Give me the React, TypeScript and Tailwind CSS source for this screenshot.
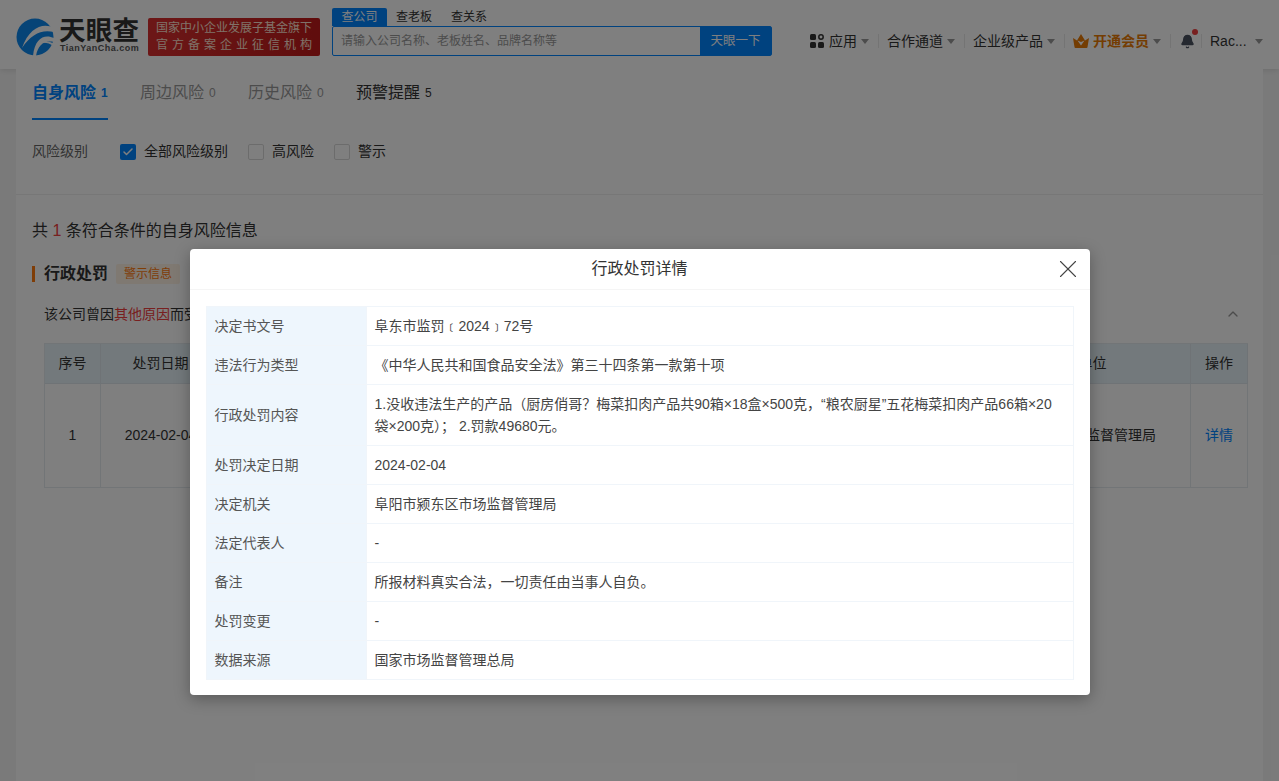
import { ChevronUp, X, Check, Bell } from "lucide-react";

const rows: [string, string[]][] = [
  ["决定书文号", ["阜东市监罚﹝2024﹞72号"]],
  ["违法行为类型", ["《中华人民共和国食品安全法》第三十四条第一款第十项"]],
  [
    "行政处罚内容",
    [
      "1.没收违法生产的产品（厨房俏哥？梅菜扣肉产品共90箱×18盒×500克，“粮农厨星”五花梅菜扣肉产品66箱×20",
      "袋×200克）； 2.罚款49680元。",
    ],
  ],
  ["处罚决定日期", ["2024-02-04"]],
  ["决定机关", ["阜阳市颍东区市场监督管理局"]],
  ["法定代表人", ["-"]],
  ["备注", ["所报材料真实合法，一切责任由当事人自负。"]],
  ["处罚变更", ["-"]],
  ["数据来源", ["国家市场监督管理总局"]],
];

function Caret() {
  return <span className="ml-[4px] h-0 w-0 border-x-[4px] border-t-[5px] border-x-transparent border-t-[#999]" />;
}

function Divider() {
  return <span className="mr-[8px] ml-[9px] h-[14px] w-px bg-[#e8e8e8]" />;
}

function Logo() {
  return (
    <svg width="38" height="38" viewBox="0 0 38 38" className="shrink-0">
      <circle cx="19" cy="19" r="18.500" fill="#0d88ee" />
      <path d="M38 10C28 4 13 9 6 30 15 16 26 11 38 14z" fill="#fff" />
      <path d="M38 20C29 16 19 19 17 38h3C22 27 28 22 38 24z" fill="#fff" />
      <path d="M25 25c4-1 8 0 13 3v-2c-5-3-10-3-13-1z" fill="#fff" />
    </svg>
  );
}

function Header() {
  return (
    <header className="flex h-[69px] items-center bg-white pt-[5px] pl-[16px] shadow-[0_1px_6px_rgba(0,0,0,0.12)]">
      <Logo />
      <div className="mb-[4px] ml-[5px] flex w-[89px] shrink-0 flex-col">
        <span className="text-[26.500px] leading-[26px] font-bold tracking-[0.3px] text-[#333]">天眼查</span>
        <span className="pl-[1px] text-[9px] leading-[8px] font-bold tracking-[0.5px] text-[#555]">TianYanCha.com</span>
      </div>
      <div className="flex h-[38px] w-[172px] shrink-0 flex-col items-center justify-center rounded-[2px] bg-gradient-to-r from-[#d92f2f] to-[#c01a1a] text-[12px] leading-[17px] text-[#ffe3d2]">
        <span>国家中小企业发展子基金旗下</span>
        <span className="pl-[4px] tracking-[4px]">官方备案企业征信机构</span>
      </div>
      <div className="mt-[3px] ml-[12px] flex w-[440px] shrink-0 flex-col self-start">
        <div className="flex h-[18px] text-[12px] leading-[18px] text-[#333]">
          <span className="w-[55px] rounded-t-[2px] bg-[#0084ff] text-center text-white">查公司</span>
          <span className="ml-[9px]">查老板</span>
          <span className="ml-[19px]">查关系</span>
        </div>
        <div className="flex h-[30px] rounded-[2px] border border-[#0084ff]">
          <span className="flex-1 pl-[8px] text-[12px] leading-[28px] text-[#999]">请输入公司名称、老板姓名、品牌名称等</span>
          <span className="w-[71px] bg-[#0084ff] text-center text-[12.500px] leading-[28px] text-white">天眼一下</span>
        </div>
      </div>
      <nav className="mt-[8px] ml-[38px] flex items-center text-[14px] text-[#333]">
        <svg width="14" height="14" viewBox="0 0 14 14" className="mr-[5px]">
          <rect width="6" height="6" rx="1.500" fill="#333" />
          <rect y="8" width="6" height="6" rx="1.500" fill="#333" />
          <rect x="8" y="8" width="6" height="6" rx="1.500" fill="#333" />
          <circle cx="11" cy="3" r="2.200" fill="none" stroke="#333" strokeWidth="1.500" />
        </svg>
        <span>应用</span>
        <Caret />
        <Divider />
        <span>合作通道</span>
        <Caret />
        <Divider />
        <span>企业级产品</span>
        <Caret />
        <Divider />
        <svg width="16" height="14" viewBox="0 0 16 14" className="mr-[4px]">
          <path d="M0 4l4 2.500L8 0l4 6.500L16 4l-1.500 9a1 1 0 0 1-1 1h-11a1 1 0 0 1-1-1z" fill="#e87a05" />
          <path d="M4.500 6.500L8 8l3.500-1.500L8 11.500z" fill="#fff" />
        </svg>
        <span className="font-bold text-[#e87a05]">开通会员</span>
        <Caret />
        <Divider />
        <span className="relative ml-[1px] flex h-[18px] w-[15px] items-center justify-center">
          <Bell size={17} fill="#4a5260" stroke="#4a5260" />
          <span className="absolute -top-[3px] -right-[3px] h-[6px] w-[6px] rounded-full bg-[#f04040]" />
        </span>
        <span className="ml-[6px] h-[14px] w-px bg-[#e8e8e8]" />
        <span className="ml-[8px]">Rac...</span>
        <span className="ml-[4px] flex"><Caret /></span>
      </nav>
    </header>
  );
}

function Tab({ name, count, tone }: { name: string; count: number; tone: string }) {
  return (
    <div className={`flex h-[47px] items-center whitespace-nowrap ${tone}`}>
      <span className="text-[16px]">{name}</span>
      <span className="ml-[5px] w-[7px] text-[12px]">{count}</span>
    </div>
  );
}

function Filter({ label, checked, left }: { label: string; checked?: boolean; left: string }) {
  return (
    <div className={`flex items-center ${left}`}>
      {checked ? (
        <span className="flex h-[16px] w-[16px] items-center justify-center rounded-[2px] bg-[#0084ff]">
          <Check size={12} strokeWidth={3} color="#fff" />
        </span>
      ) : (
        <span className="h-[16px] w-[16px] rounded-[2px] border border-[#d9d9d9] bg-white" />
      )}
      <span className="ml-[8px] text-[14px] text-[#333]">{label}</span>
    </div>
  );
}

function Background() {
  return (
    <main className="mx-[16px] h-[712px] bg-white">
      <div className="flex h-[49px] gap-[32px] pl-[16px]">
        <div className="relative">
          <Tab name="自身风险" count={1} tone="font-semibold text-[#0084ff]" />
          <span className="absolute bottom-0 left-0 h-[2px] w-[76px] translate-y-[2px] bg-[#0084ff]" />
        </div>
        <Tab name="周边风险" count={0} tone="text-[#999]" />
        <Tab name="历史风险" count={0} tone="text-[#999]" />
        <Tab name="预警提醒" count={5} tone="text-[#333]" />
      </div>
      <div className="flex h-[77px] items-start border-b border-[#eee] pt-[23px] pl-[16px]">
        <span className="w-[88px] text-[14px] leading-[21px] text-[#666]">风险级别</span>
        <Filter label="全部风险级别" checked left="" />
        <Filter label="高风险" left="ml-[20px]" />
        <Filter label="警示" left="ml-[20px]" />
      </div>
      <p className="mt-[24px] pl-[16px] text-[16px] leading-[24px] text-[#333]">
        共 <span className="text-[#f04040]">1</span> 条符合条件的自身风险信息
      </p>
      <div className="mt-[19px] flex h-[24px] items-center pl-[16px]">
        <span className="h-[16px] w-[3px] bg-[#ff7a0f]" />
        <span className="ml-[9px] text-[16px] font-bold text-[#333]">行政处罚</span>
        <span className="ml-[8px] rounded-[2px] bg-[#fff2e5] px-[8px] text-[12px] leading-[20px] text-[#ff7a0f]">警示信息</span>
      </div>
      <div className="mt-[17px] flex h-[22px] items-center justify-between pr-[22px] pl-[28px] text-[14px] text-[#333]">
        <span>
          该公司曾因<span className="text-[#f04040]">其他原因</span>而受
        </span>
        <ChevronUp size={16} color="#999" />
      </div>
      <div className="mt-[18px] mr-[15px] ml-[28px] grid grid-cols-[56px_120px_1fr_224px_57px] border-t border-l border-[#e5eaef] text-center text-[14px] text-[#333]">
        {["序号", "处罚日期", "", "处罚单位", "操作"].map((h, i) => (
          <div key={i} className="flex h-[40px] items-center justify-center border-r border-b border-[#dfe7ec] bg-[#e6f2f8]">
            {h}
          </div>
        ))}
        <div className="flex h-[104px] items-center justify-center border-r border-b border-[#e5eaef]">1</div>
        <div className="flex h-[104px] items-center justify-center border-r border-b border-[#e5eaef]">2024-02-04</div>
        <div className="h-[104px] border-r border-b border-[#e5eaef]" />
        <div className="flex h-[104px] items-center border-r border-b border-[#e5eaef] pl-[7px]">阜阳市颍东区市场监督管理局</div>
        <div className="flex h-[104px] items-center justify-center border-r border-b border-[#e5eaef] text-[#0084ff]">详情</div>
      </div>
    </main>
  );
}

function Dialog() {
  return (
    <div className="absolute inset-0 flex items-start justify-center bg-black/50 pt-[249px]">
      <div className="w-[900px] rounded-[4px] bg-white shadow-[0_4px_16px_rgba(0,0,0,0.3)]">
        <div className="relative flex h-[41px] items-center justify-center border-b border-[#f5f5f5] text-[16px] text-[#333]">
          行政处罚详情
          <X size={30} strokeWidth={0.900} color="#444" className="absolute top-[5px] right-[7px]" />
        </div>
        <div className="px-[16px] pt-[16px] pb-[15px]">
          <table className="w-full border-collapse text-[14px] leading-[22px]">
            <tbody>
              {rows.map(([label, lines]) => (
                <tr key={label}>
                  <td className="w-[160px] border border-[#f0f5fa] bg-[#eef6fd] px-[8px] py-[8px] text-[#555]">{label}</td>
                  <td className="border border-[#f0f5fa] px-[8px] py-[8px] text-[#444]">
                    {lines.map((line) => (
                      <div key={line} className="whitespace-nowrap">{line}</div>
                    ))}
                  </td>
                </tr>
              ))}
            </tbody>
          </table>
        </div>
      </div>
    </div>
  );
}

export default function App() {
  return (
    <div className="relative h-[781px] overflow-hidden bg-[#f5f5f5] font-['Liberation_Sans','Noto_Sans_CJK_SC',sans-serif]">
      <Header />
      <Background />
      <Dialog />
    </div>
  );
}
